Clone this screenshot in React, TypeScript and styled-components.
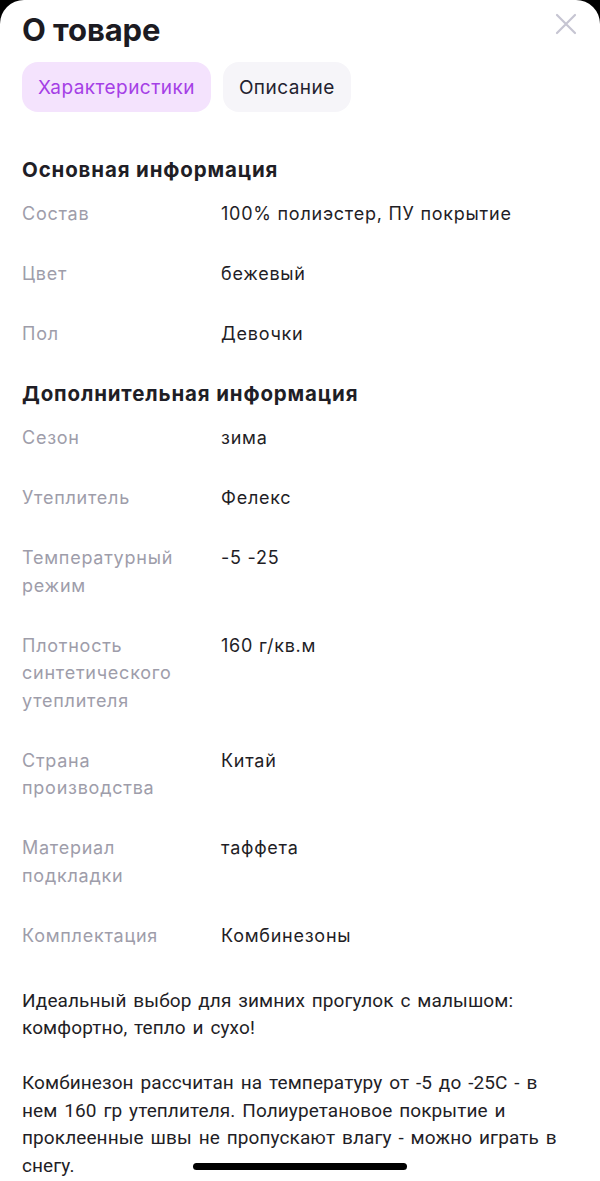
import React from "react";
import styled, { createGlobalStyle } from "styled-components";

const GlobalStyle = createGlobalStyle`
  html, body { margin: 0; padding: 0; background: #000; }
  body { font-family: "Inter", "Noto Sans", sans-serif; -webkit-font-smoothing: antialiased; }
  * { box-sizing: border-box; }
`;

const Screen = styled.div`
  position: relative;
  width: 600px;
  height: 1181px;
  overflow: hidden;
  background: #000;
`;

const Sheet = styled.div`
  background: #fff;
  border-radius: 24px 24px 0 0;
  min-height: 1181px;
  padding: 12px 22px 40px;
`;

const Header = styled.div`
  display: flex;
  align-items: flex-start;
  justify-content: space-between;
`;

const Title = styled.h1`
  margin: 0;
  font-size: 31px;
  line-height: 36px;
  font-weight: 700;
  color: #1c1b22;
  letter-spacing: -0.1px;
`;

const CloseButton = styled.button`
  border: 0;
  background: none;
  padding: 0;
  margin: 0;
  width: 24px;
  height: 24px;
  display: flex;
  align-items: center;
  justify-content: center;
  color: #c6c5d2;
`;

const Tabs = styled.div`
  display: flex;
  gap: 12px;
  margin-top: 14px;
`;

const Tab = styled.button<{ $active?: boolean }>`
  height: 50px;
  padding: 0 16px;
  border: 0;
  border-radius: 16px;
  font-family: "Inter", sans-serif;
  font-size: 19px;
  letter-spacing: 0.45px;
  font-weight: 400;
  background: ${(p) => (p.$active ? "#f4e3fd" : "#f6f5f9")};
  color: ${(p) => (p.$active ? "#a53fe6" : "#232230")};
`;

const SectionTitle = styled.h2<{ $first?: boolean }>`
  margin: ${(p) => (p.$first ? "44px" : "16px")} 0 0;
  font-size: 20.5px;
  line-height: 28px;
  font-weight: 700;
  letter-spacing: 0.85px;
  color: #1f1e26;
`;

const Row = styled.div`
  display: grid;
  grid-template-columns: 199px 1fr;
  padding: 16.25px 0;
  font-size: 18px;
  line-height: 27.5px;
  letter-spacing: 0.75px;
`;

const Label = styled.div`
  color: #9e9daa;
  padding-right: 10px;
`;

const Value = styled.div`
  color: #1f1e26;
`;

const Description = styled.div`
  margin-top: 21px;
  font-family: "Roboto", "Noto Sans", sans-serif;
  font-size: 19px;
  line-height: 27.5px;
  letter-spacing: 0.1px;
  word-spacing: 2px;
  color: #1f1e26;
  p { margin: 0 0 27.5px; }
`;

const HomeIndicator = styled.div`
  position: absolute;
  left: 193px;
  bottom: 11px;
  width: 214px;
  height: 7px;
  border-radius: 4px;
  background: #000;
`;

const basic: [string, string][] = [
  ["Состав", "100% полиэстер, ПУ покрытие"],
  ["Цвет", "бежевый"],
  ["Пол", "Девочки"],
];

const extra: [string, string][] = [
  ["Сезон", "зима"],
  ["Утеплитель", "Фелекс"],
  ["Температурный режим", "-5 -25"],
  ["Плотность синтетического утеплителя", "160 г/кв.м"],
  ["Страна производства", "Китай"],
  ["Материал подкладки", "таффета"],
  ["Комплектация", "Комбинезоны"],
];

export default function App() {
  return (
    <>
      <GlobalStyle />
      <Screen>
        <Sheet>
          <Header>
            <Title>О товаре</Title>
            <CloseButton aria-label="Закрыть">
              <svg width="22" height="22" viewBox="0 0 22 22" fill="none">
                <path d="M2 2L20 20M20 2L2 20" stroke="currentColor" strokeWidth="2.2" strokeLinecap="round" />
              </svg>
            </CloseButton>
          </Header>
          <Tabs>
            <Tab $active>Характеристики</Tab>
            <Tab>Описание</Tab>
          </Tabs>
          <SectionTitle $first>Основная информация</SectionTitle>
          {basic.map(([l, v]) => (
            <Row key={l}>
              <Label>{l}</Label>
              <Value>{v}</Value>
            </Row>
          ))}
          <SectionTitle>Дополнительная информация</SectionTitle>
          {extra.map(([l, v]) => (
            <Row key={l}>
              <Label>{l}</Label>
              <Value>{v}</Value>
            </Row>
          ))}
          <Description>
            <p>Идеальный выбор для зимних прогулок с малышом: комфортно, тепло и сухо!</p>
            <p>
              Комбинезон рассчитан на температуру от -5 до -25С - в нем 160 гр утеплителя. Полиуретановое покрытие и
              проклеенные швы не пропускают влагу - можно играть в снегу.
            </p>
          </Description>
        </Sheet>
        <HomeIndicator />
      </Screen>
    </>
  );
}
